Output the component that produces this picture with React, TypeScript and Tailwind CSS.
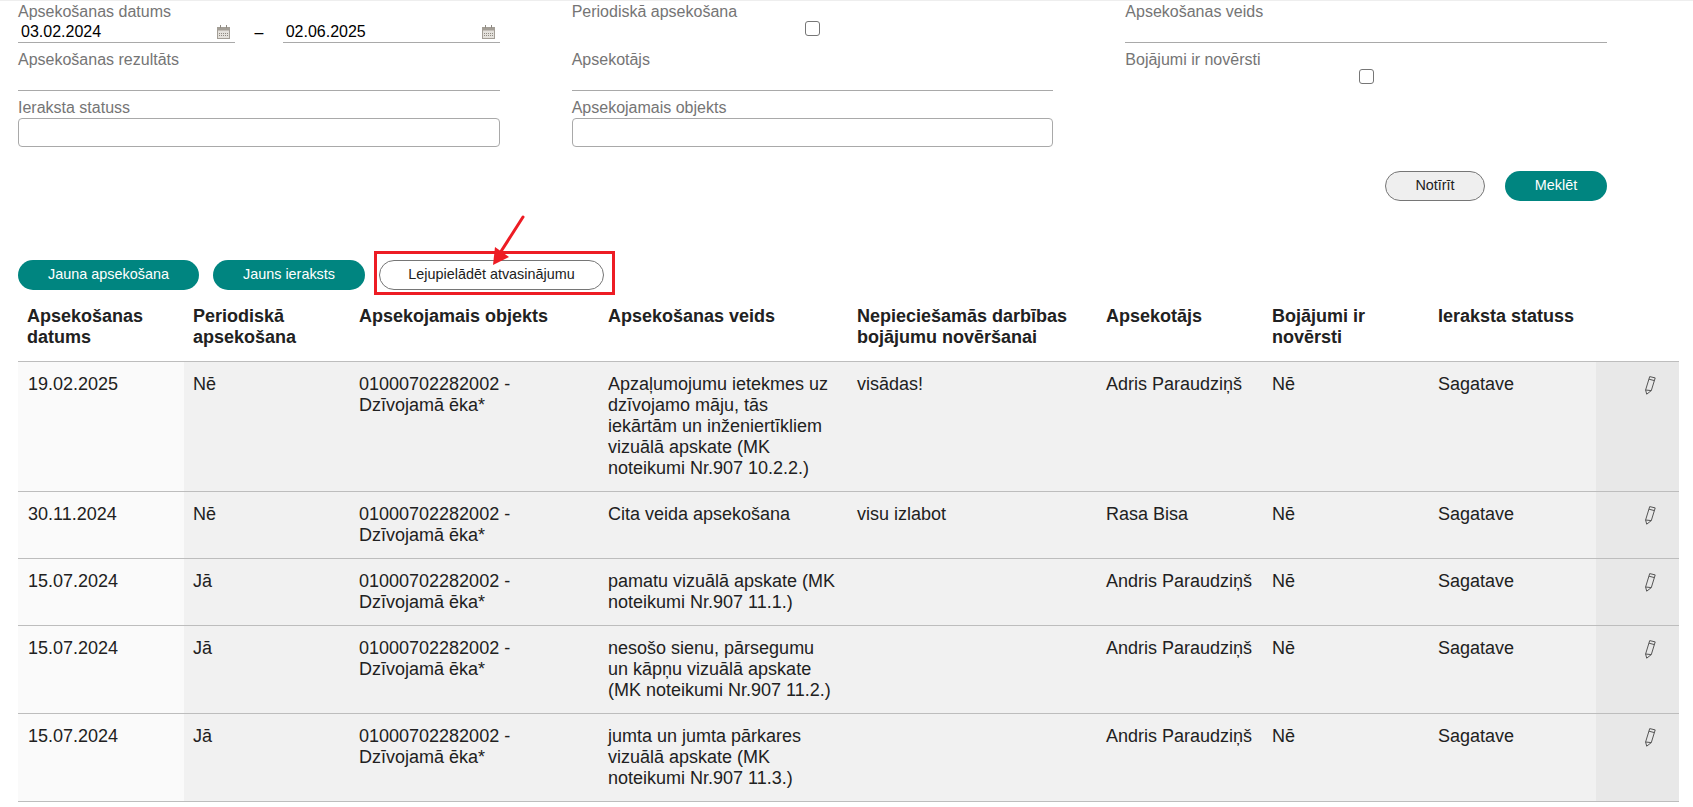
import React from "react";

const rows = [
  {
    date: "19.02.2025",
    periodic: "Nē",
    type: "Apzaļumojumu ietekmes uz dzīvojamo māju, tās iekārtām un inženiertīkliem vizuālā apskate (MK noteikumi Nr.907 10.2.2.)",
    action: "visādas!",
    inspector: "Adris Paraudziņš",
  },
  { date: "30.11.2024", periodic: "Nē", type: "Cita veida apsekošana", action: "visu izlabot", inspector: "Rasa Bisa" },
  { date: "15.07.2024", periodic: "Jā", type: "pamatu vizuālā apskate (MK noteikumi Nr.907 11.1.)", action: "", inspector: "Andris Paraudziņš" },
  { date: "15.07.2024", periodic: "Jā", type: "nesošo sienu, pārsegumu un kāpņu vizuālā apskate (MK noteikumi Nr.907 11.2.)", action: "", inspector: "Andris Paraudziņš" },
  { date: "15.07.2024", periodic: "Jā", type: "jumta un jumta pārkares vizuālā apskate (MK noteikumi Nr.907 11.3.)", action: "", inspector: "Andris Paraudziņš" },
];

const headers = [
  "Apsekošanas datums",
  "Periodiskā apsekošana",
  "Apsekojamais objekts",
  "Apsekošanas veids",
  "Nepieciešamās darbības bojājumu novēršanai",
  "Apsekotājs",
  "Bojājumi ir novērsti",
  "Ieraksta statuss",
];

const CalendarIcon = () => (
  <svg width="13" height="14" viewBox="0 0 13 14" className="shrink-0">
    <rect x="0.5" y="2.5" width="12" height="11" fill="#e4e1dc" stroke="#a39e96" />
    <rect x="0.5" y="2.5" width="12" height="3" fill="#a39e96" />
    <rect x="3" y="0" width="1" height="3" fill="#8f8a82" />
    <rect x="9" y="0" width="1" height="3" fill="#8f8a82" />
    <path d="M2 8.5h9M2 10.5h9" stroke="#8f8a82" strokeDasharray="1 1" />
  </svg>
);

const PencilIcon = () => (
  <svg width="11" height="19" viewBox="0 0 11 19" fill="none" stroke="#555" strokeWidth="1">
    <path d="M4.7 0.6 L10.2 1.9 L6.3 14.6 L1.7 18.2 L0.6 14 Z" />
    <path d="M4 3.2 L9.4 4.6" />
    <path d="M0.6 14 L6.3 14.6" />
  </svg>
);

const Label = ({ children }: { children: React.ReactNode }) => (
  <div className="h-[20px] text-[16px] leading-[20px] text-[#757575]">{children}</div>
);

const DateField = ({ value }: { value: string }) => (
  <div className="flex h-[21px] w-[217px] items-center justify-between border-b border-[#a9a9a9] pl-[3px] pr-[5px] text-[16px] leading-[20px] text-black">
    <span>{value}</span>
    <CalendarIcon />
  </div>
);

const Checkbox = () => <div className="-mt-px h-[15px] w-[15px] rounded-[3px] border border-[#767676]" />;

const PillButton = ({ children, className }: { children: React.ReactNode; className: string }) => (
  <button className={`flex h-[30px] items-center justify-center rounded-[15px] text-[14.4px] ${className}`}>{children}</button>
);

const cell = "bg-[#f1f1f1] pl-[9px] pr-[9px] pb-[12px] pt-[12px] align-top";

export default function App() {
  return (
    <div className="h-[807px] w-[1693px] overflow-hidden border-t border-[#eeeeee] bg-white text-[#212121] font-['Liberation_Sans',Arial,sans-serif]">
      {/* Filters */}
      <div className="grid w-[1607px] grid-cols-3 gap-x-[72px] pl-[18px] pt-[1px]">
        <div>
          <Label>Apsekošanas datums</Label>
          <div className="flex h-[21px] items-center justify-between">
            <DateField value="03.02.2024" />
            <span className="text-[16px] leading-[20px] text-black">–</span>
            <DateField value="02.06.2025" />
          </div>
          <div className="mt-[7px]">
            <Label>Apsekošanas rezultāts</Label>
            <div className="h-[21px] border-b border-[#a9a9a9]" />
          </div>
          <div className="mt-[7px]">
            <Label>Ieraksta statuss</Label>
            <div className="h-[29px] rounded-[4px] border border-[#a9a9a9]" />
          </div>
        </div>
        <div>
          <Label>Periodiskā apsekošana</Label>
          <div className="flex h-[21px] items-start justify-center">
            <Checkbox />
          </div>
          <div className="mt-[7px]">
            <Label>Apsekotājs</Label>
            <div className="h-[21px] border-b border-[#a9a9a9]" />
          </div>
          <div className="mt-[7px]">
            <Label>Apsekojamais objekts</Label>
            <div className="h-[29px] rounded-[4px] border border-[#a9a9a9]" />
          </div>
        </div>
        <div>
          <Label>Apsekošanas veids</Label>
          <div className="h-[21px] border-b border-[#a9a9a9]" />
          <div className="mt-[7px]">
            <Label>Bojājumi ir novērsti</Label>
            <div className="flex h-[21px] items-start justify-center">
              <Checkbox />
            </div>
          </div>
        </div>
      </div>

      <div className="mt-[24px] flex w-[1607px] justify-end gap-[20px]">
        <PillButton className="w-[100px] border border-[#767676] bg-[#efefef] text-[#212121]">Notīrīt</PillButton>
        <PillButton className="w-[102px] bg-[#008580] text-white">Meklēt</PillButton>
      </div>

      {/* Actions */}
      <div className="relative mt-[59px] flex gap-[14px] pl-[18px]">
        <PillButton className="w-[181px] bg-[#008580] text-white">Jauna apsekošana</PillButton>
        <PillButton className="w-[152px] bg-[#008580] text-white">Jauns ieraksts</PillButton>
        <PillButton className="w-[225px] border border-[#767676] bg-white text-[#212121]">Lejupielādēt atvasinājumu</PillButton>
        {/* annotation drawn over the page */}
        <div className="absolute left-[374px] top-[-9px] h-[44px] w-[241px] border-[3px] border-[#ed1c24]" />
        <svg className="absolute left-[485px] top-[-45px]" width="45" height="55" viewBox="0 0 45 55" fill="none">
          <path d="M38 2 L15 38" stroke="#ed1c24" strokeWidth="3" strokeLinecap="round" />
          <path d="M8 50 L10 32 L24 42 Z" fill="#ed1c24" />
        </svg>
      </div>

      {/* Table */}
      <table className="ml-[18px] mt-[10px] w-[1661px] table-fixed border-collapse text-[18px] leading-[21px]">
        <colgroup>
          <col className="w-[166px]" />
          <col className="w-[166px]" />
          <col className="w-[249px]" />
          <col className="w-[249px]" />
          <col className="w-[249px]" />
          <col className="w-[166px]" />
          <col className="w-[166px]" />
          <col className="w-[167px]" />
          <col className="w-[83px]" />
        </colgroup>
        <thead>
          <tr className="border-b border-[#bdbdbd]">
            {headers.map((h) => (
              <th key={h} className="h-[61px] px-[9px] pt-[6px] text-left align-top font-bold text-[#212121]">
                {h}
              </th>
            ))}
            <th />
          </tr>
        </thead>
        <tbody>
          {rows.map((r, i) => (
            <tr key={i} className="border-b border-[#bdbdbd]">
              <td className="bg-[#fafafa] pl-[10px] pr-[8px] pb-[12px] pt-[12px] align-top">{r.date}</td>
              <td className={cell}>{r.periodic}</td>
              <td className={cell}>01000702282002 - Dzīvojamā ēka*</td>
              <td className={cell}>{r.type}</td>
              <td className={cell}>{r.action}</td>
              <td className={cell}>{r.inspector}</td>
              <td className={cell}>Nē</td>
              <td className={cell}>Sagatave</td>
              <td className="bg-[#e8e8e8] pt-[14px] pr-[23px] text-right align-top">
                <span className="inline-block">
                  <PencilIcon />
                </span>
              </td>
            </tr>
          ))}
        </tbody>
      </table>
    </div>
  );
}
